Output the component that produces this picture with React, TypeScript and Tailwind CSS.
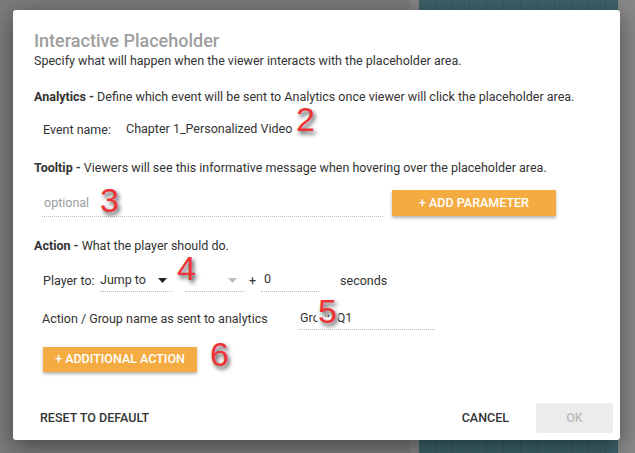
import React from 'react';

function Mark({n, className}: {n: string; className: string}) {
	return (
		<span
			className={`absolute font-['Liberation_Sans',Arial,sans-serif] text-[34px] leading-[26px] text-[#ee3338] [paint-order:stroke_fill] [-webkit-text-stroke:6px_#fff] [text-shadow:2px_3px_4px_rgba(0,0,0,0.7)] ${className}`}
		>
			{n}
		</span>
	);
}

function Caret({gray}: {gray?: boolean}) {
	return (
		<svg width="9" height="5" viewBox="0 0 9 5" className="shrink-0">
			<path d="M0 0h9L4.5 5z" fill={gray ? '#bdbdbd' : '#222'} />
		</svg>
	);
}

export default function App() {
	return (
		<div className="relative w-[635px] h-[453px] overflow-hidden bg-[#7c7c7c] font-['Roboto',sans-serif] text-[12.5px] text-[#333]">
			{/* page behind the overlay */}
			<div className="absolute left-[410px] top-0 w-[9px] h-full bg-[#858585]" />
			<div className="absolute left-[419px] top-0 w-[199px] h-full bg-[#3d6269] bg-[repeating-linear-gradient(90deg,transparent_0,transparent_16px,#37595f_16px,#37595f_17px)]" />
			<div className="absolute left-[618px] top-0 w-[17px] h-full bg-[#888]" />

			<div className="relative ml-[13px] mt-[10px] w-[607px] h-[430px] bg-white rounded-[3px] shadow-[0_6px_24px_rgba(0,0,0,0.45)] flex flex-col">
				<div className="pl-[21px] pt-[19px]">
					<h1 className="text-[18px] leading-[24px] font-medium text-[#9e9e9e]">
						Interactive Placeholder
					</h1>
					<p className="leading-[16px]">
						Specify what will happen when the viewer interacts with the placeholder area.
					</p>

					<p className="mt-[20px] leading-[16px]">
						<span className="font-bold">Analytics -</span> Define which event will be sent to Analytics once viewer will click the placeholder area.
					</p>
					<div className="relative mt-[17px] ml-[9px] flex items-center h-[16px]">
						<span className="w-[83px]">Event name:</span>
						<span className="-mt-[2px]">Chapter 1_Personalized Video</span>
						<Mark n="2" className="left-[253px] -top-[16px]" />
					</div>

					<p className="mt-[22px] leading-[16px]">
						<span className="font-bold">Tooltip -</span> Viewers will see this informative message when hovering over the placeholder area.
					</p>
					<div className="relative mt-[14px] flex items-start">
						<div className="ml-[8px] w-[341px] h-[27px] flex items-center pl-[2px] border-b border-dotted border-[#bdbdbd] text-[#9e9e9e]">
							optional
						</div>
						<button className="ml-[9px] w-[164px] h-[26px] bg-[#f4ab42] text-white font-medium text-[12.5px] shadow-[0_2px_3px_rgba(0,0,0,0.3)]">
							+ ADD PARAMETER
						</button>
						<Mark n="3" className="left-[66px] -top-[3px]" />
					</div>

					<p className="mt-[21px] leading-[16px]">
						<span className="font-bold">Action -</span> What the player should do.
					</p>
					<div className="relative mt-[16px] ml-[9px] flex items-center h-[22px]">
						<span className="w-[57px]">Player to:</span>
						<div className="w-[72px] h-[22px] flex items-center justify-between pr-[5px] border-b border-dotted border-[#bdbdbd]">
							<span>Jump to</span>
							<Caret />
						</div>
						<div className="ml-[13px] w-[60px] h-[22px] flex items-center justify-end pr-[8px] border-b border-dotted border-[#bdbdbd]">
							<Caret gray />
						</div>
						<span className="ml-[4px]">+</span>
						<div className="ml-[5px] w-[58px] h-[22px] flex items-center pl-[3px] border-b border-dotted border-[#bdbdbd]">
							<span className="-mt-[2px]">0</span>
						</div>
						<span className="ml-[21px]">seconds</span>
						<Mark n="4" className="left-[134px] -top-[15px]" />
					</div>

					<div className="relative mt-[16px] ml-[8px] flex items-center h-[22px]">
						<span className="w-[257px]">Action / Group name as sent to analytics</span>
						<div className="w-[136px] h-[22px] flex items-center pl-[1px] border-b border-dotted border-[#bdbdbd]">
							<span>Group Q1</span>
						</div>
						<Mark n="5" className="left-[276px] -top-[10px]" />
					</div>

					<div className="relative mt-[17px] ml-[9px] flex">
						<button className="w-[154px] h-[25px] bg-[#f4ab42] text-white font-medium text-[12.5px] shadow-[0_2px_3px_rgba(0,0,0,0.3)]">
							+ ADDITIONAL ACTION
						</button>
						<Mark n="6" className="left-[167px] -top-[6px]" />
					</div>
				</div>

				<div className="mt-auto mb-[7px] flex items-center h-[30px] pl-[27px] pr-[7px]">
					<button className="font-medium text-[12.5px] text-[#333]">RESET TO DEFAULT</button>
					<button className="ml-auto font-medium text-[12.5px] text-[#333]">CANCEL</button>
					<button className="ml-[27px] w-[77px] h-[30px] rounded-[3px] bg-[#ececec] font-medium text-[12.5px] text-[#bbb]">
						OK
					</button>
				</div>
			</div>
		</div>
	);
}
